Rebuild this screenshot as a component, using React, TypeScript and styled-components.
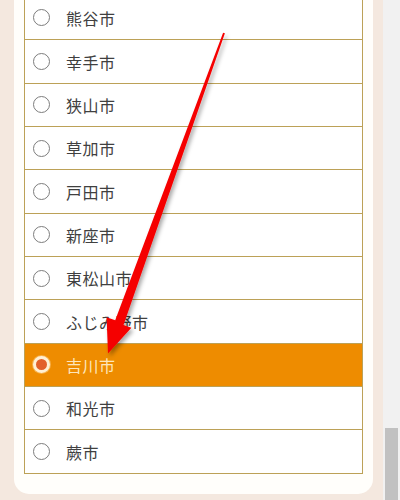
import React from "react";
import styled, { createGlobalStyle } from "styled-components";

const GlobalStyle = createGlobalStyle`
  html, body {
    margin: 0;
    padding: 0;
    overflow: hidden;
  }
  body {
    font-family: "Noto Sans CJK JP", "Noto Sans", sans-serif;
  }
`;

const Page = styled.div`
  position: relative;
  display: flex;
  flex-direction: row;
  width: 400px;
  height: 500px;
  overflow: hidden;
`;

const Main = styled.main`
  flex: 1;
  background: #f4e8df;
  padding: 0 10px 0 14px;
`;

const Card = styled.section`
  background: #fffefb;
  margin-top: -4px;
  padding: 0 10px 20px 10px;
  border-radius: 0 0 15px 15px;
`;

const List = styled.ul`
  list-style: none;
  margin: 0;
  padding: 0;
  border: 1px solid #bca157;
  border-top: none;
`;

const Row = styled.li<{ $checked?: boolean }>`
  display: flex;
  align-items: center;
  gap: 16px;
  box-sizing: border-box;
  height: 43.35px;
  padding-left: 8px;
  background: ${(p) => (p.$checked ? "#ee8c00" : "#ffffff")};
  color: ${(p) => (p.$checked ? "#fde6bb" : "#404040")};
  font-size: 16px;
  letter-spacing: 0.5px;
  & + & {
    border-top: 1px solid #bca157;
  }
`;

const Radio = styled.span<{ $checked?: boolean }>`
  display: flex;
  align-items: center;
  justify-content: center;
  box-sizing: border-box;
  width: 17px;
  height: 17px;
  border-radius: 50%;
  border: ${(p) => (p.$checked ? "3px solid #fff0d4" : "1px solid #7d7d7d")};
  background: ${(p) => (p.$checked ? "#e2602a" : "#ffffff")};
  box-shadow: ${(p) => (p.$checked ? "0 0 0 1px #f6b04a" : "none")};
`;

const ScrollTrack = styled.div`
  width: 17px;
  background: #f1f1f1;
  display: flex;
  flex-direction: column;
`;

const ScrollThumb = styled.div`
  margin: 428px 2px 0 2px;
  flex: 1;
  background: #c1c1c1;
`;

const ArrowLayer = styled.svg`
  position: absolute;
  left: 0;
  top: 0;
  pointer-events: none;
`;

const cities = [
  "熊谷市",
  "幸手市",
  "狭山市",
  "草加市",
  "戸田市",
  "新座市",
  "東松山市",
  "ふじみ野市",
  "吉川市",
  "和光市",
  "蕨市",
];

const Arrow = () => (
  <ArrowLayer width="400" height="500" viewBox="0 0 400 500">
    <defs>
      <filter id="arrowShadow" x="-20%" y="-20%" width="140%" height="140%">
        <feDropShadow dx="2" dy="3" stdDeviation="2" floodColor="#000" floodOpacity="0.35" />
      </filter>
    </defs>
    <polygon
      filter="url(#arrowShadow)"
      fill="#f50000"
      points="223.1,32.7 115.2,320.3 106.6,317.2 108,353.5 131.4,327.8 123.5,324.9 224.9,33.3"
    />
  </ArrowLayer>
);

const App = () => {
  const selected = "吉川市";
  return (
    <Page>
      <GlobalStyle />
      <Main>
        <Card>
          <List>
            {cities.map((city) => (
              <Row key={city} $checked={city === selected}>
                <Radio $checked={city === selected} />
                <span>{city}</span>
              </Row>
            ))}
          </List>
        </Card>
      </Main>
      <ScrollTrack>
        <ScrollThumb />
      </ScrollTrack>
      <Arrow />
    </Page>
  );
};

export default App;
